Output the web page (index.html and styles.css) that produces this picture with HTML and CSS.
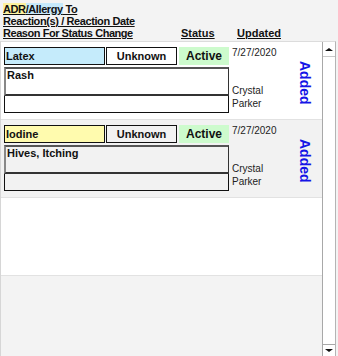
FILE: index.html
```html
<!DOCTYPE html>
<html lang="en">
<head>
  <meta charset="UTF-8">
  <title>Allergies</title>
  <link rel="stylesheet" href="styles.css">
</head>
<body>
  <!-- Column headings -->
  <div class="head">
    <div class="head-line"><span class="mark-adr">ADR</span><span class="mark-allergy">/Allergy</span> To</div>
    <div class="head-line">Reaction(s) / Reaction Date</div>
    <div class="head-line head-cols">
      <span>Reason For Status Change</span>
      <span>Status</span>
      <span>Updated</span>
    </div>
  </div>

  <div class="list">
    <div class="rows">
      <!-- Row 1 -->
      <div class="row">
        <div class="main">
          <div class="top">
            <div class="field name latex">Latex</div>
            <div class="field unknown">Unknown</div>
            <div class="field active">Active</div>
          </div>
          <div class="reaction">Rash</div>
          <div class="reason"></div>
        </div>
        <div class="updated">
          <div class="date">7/27/2020</div>
          <div class="who">Crystal<br>Parker</div>
        </div>
        <div class="action"><span>Added</span></div>
      </div>

      <!-- Row 2 -->
      <div class="row alt">
        <div class="main">
          <div class="top">
            <div class="field name iodine">Iodine</div>
            <div class="field unknown">Unknown</div>
            <div class="field active">Active</div>
          </div>
          <div class="reaction">Hives, Itching</div>
          <div class="reason"></div>
        </div>
        <div class="updated">
          <div class="date">7/27/2020</div>
          <div class="who">Crystal<br>Parker</div>
        </div>
        <div class="action"><span>Added</span></div>
      </div>

      <!-- empty row -->
      <div class="row"></div>
    </div>

    <div class="scrollbar">
      <div class="arrow up"></div>
      <div class="track"></div>
      <div class="arrow down"></div>
    </div>
  </div>
</body>
</html>
```

FILE: styles.css
```css
body {
  margin: 0;
  padding: 0;
  background: #f3f3f3;
  font-family: 'Liberation Sans', Arial, sans-serif;
  color: #111;
  width: 338px;
  height: 356px;
  overflow: hidden;
}

.head {
  padding: 3px 0 0 3px;
  height: 38px;
  font-size: 11px;
  font-weight: bold;
  letter-spacing: -0.4px;
}

.head-line {
  line-height: 12px;
  height: 12px;
  text-decoration: underline;
}

.mark-adr {
  background: #fdf29e;
}

.mark-allergy {
  background: #c6e9fb;
}

.head-cols {
  display: grid;
  grid-template-columns: 178px 56px auto;
  letter-spacing: 0;
}

.head-cols span:first-child {
  letter-spacing: -0.45px;
}

.list {
  display: flex;
  height: 314px;
  width: 334px;
  border-top: 1px solid #dcdcdc;
  border-left: 1px solid #d6d6d6;
  border-right: 1px solid #b4b4b4;
}

.rows {
  flex: 1;
  display: flex;
  flex-direction: column;
}

.row {
  display: flex;
  height: 72px;
  padding: 5px 0 0 3px;
  background: #fff;
  border-bottom: 1px solid #e2e2e2;
}

.row.alt {
  background: #f2f2f2;
}

.main {
  width: 225px;
  font-size: 11px;
  font-weight: bold;
}

.top {
  display: flex;
  height: 18px;
}

.field {
  box-sizing: border-box;
  height: 18px;
  line-height: 16px;
}

.name {
  width: 101px;
  padding-left: 1px;
  border: 1px solid #111;
}

.latex {
  background: #c5ebfb;
}

.iodine {
  background: #fffbae;
}

.unknown {
  width: 71px;
  margin-left: 1px;
  text-align: center;
  border: 1px solid #111;
  background: #fff;
}

.alt .unknown {
  background: #f2f2f2;
}

.active {
  width: 50px;
  margin-left: 2px;
  text-align: center;
  line-height: 18px;
  font-size: 12px;
  background: #cdfbcd;
}

.reaction {
  box-sizing: border-box;
  height: 29px;
  margin-top: 2px;
  padding: 0 0 0 1px;
  line-height: 12px;
  border-top: 2px solid #555;
  border-left: 2px solid #888;
  border-right: 1px solid #333;
  border-bottom: 2px solid #333;
  background: #fff;
}

.reason {
  box-sizing: border-box;
  height: 17px;
  border: 1px solid #111;
  border-top: none;
  background: #fff;
}

.alt .reaction,
.alt .reason {
  background: #f2f2f2;
}

.updated {
  width: 58px;
  margin-left: 3px;
  font-size: 10px;
  color: #222;
}

.date {
  line-height: 12px;
}

.who {
  margin-top: 25px;
  line-height: 13px;
}

.action {
  flex: 1;
  display: flex;
  align-items: center;
  justify-content: center;
  height: 72px;
  padding-right: 2px;
}

.action span {
  writing-mode: vertical-rl;
  color: #1515e6;
  font-weight: bold;
  font-size: 14px;
}

.scrollbar {
  width: 12px;
  display: flex;
  flex-direction: column;
  background: #fff;
  border-left: 1px solid #a8a8a8;
}

.track {
  flex: 1;
}

.arrow {
  height: 14px;
  display: flex;
  align-items: center;
  justify-content: center;
}

.arrow.up {
  border-bottom: 1px solid #c8c8c8;
}

.arrow.down {
  height: 11px;
  border-top: 1px solid #a8a8a8;
}

.arrow::before {
  content: '';
  width: 0;
  height: 0;
  border-left: 4px solid transparent;
  border-right: 4px solid transparent;
}

.arrow.up::before {
  border-bottom: 3px solid #111;
}

.arrow.down::before {
  border-top: 3px solid #111;
}
```
